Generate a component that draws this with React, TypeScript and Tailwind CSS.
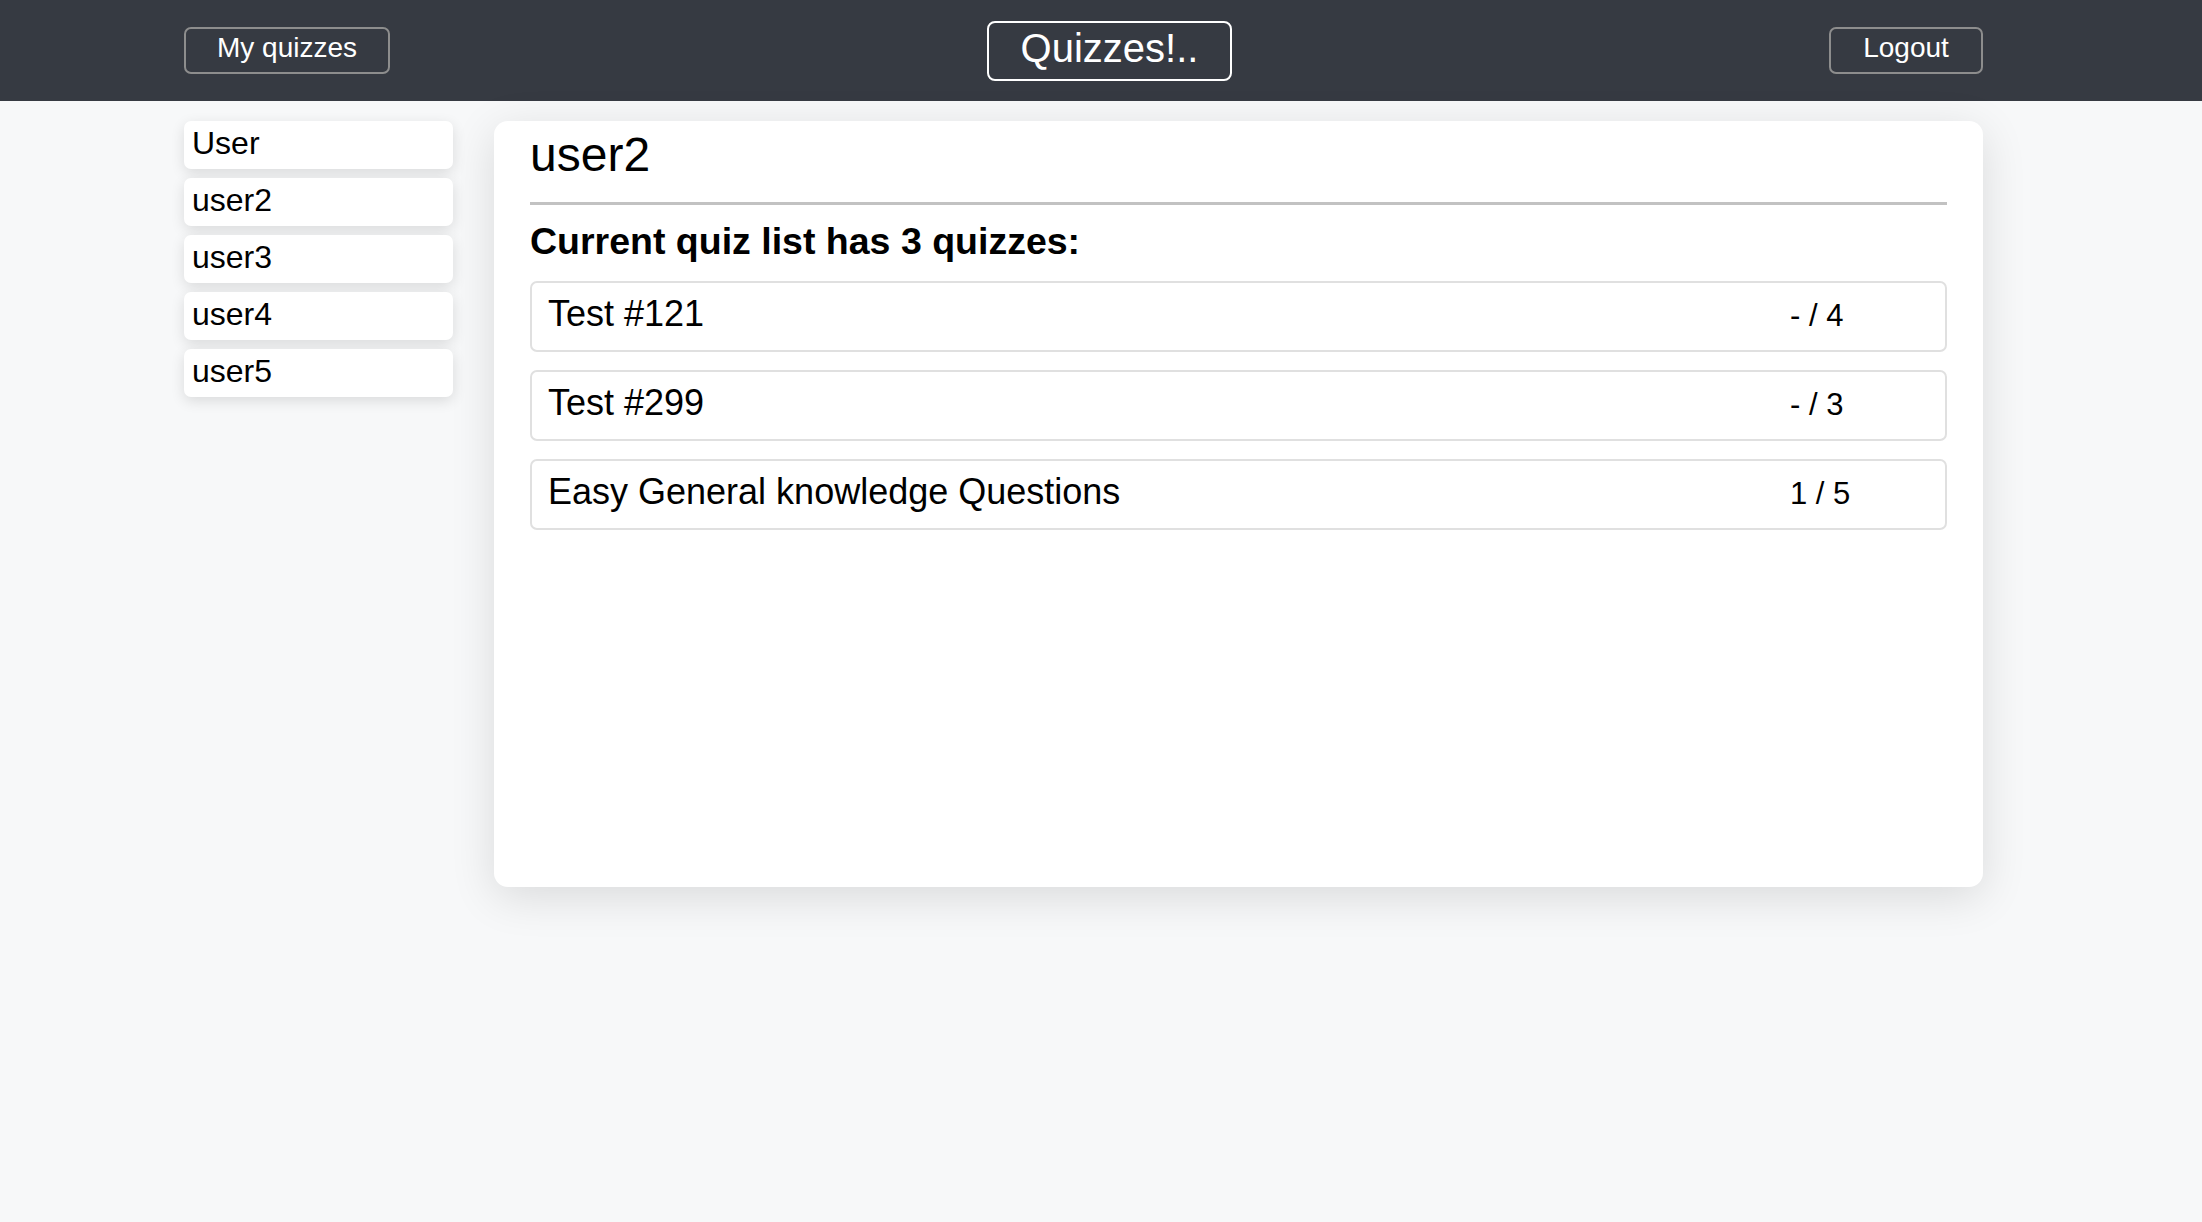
const users = ["User", "user2", "user3", "user4", "user5"];

const quizzes = [
  { title: "Test #121", score: "- / 4" },
  { title: "Test #299", score: "- / 3" },
  { title: "Easy General knowledge Questions", score: "1 / 5" },
];

function Header() {
  return (
    <header className="h-[101px] bg-[#363a42]">
      <div className="ml-[184px] flex h-full w-[1799px] items-center justify-between text-white">
        <button className="flex h-[47px] w-[206px] items-center justify-center rounded-[7px] border-2 border-[#8d8d8d] pb-[5px] text-[28px]">
          My quizzes
        </button>
        <button className="flex h-[60px] w-[245px] items-center justify-center rounded-[8px] border-2 border-white pb-[6px] text-[40px]">
          Quizzes!..
        </button>
        <button className="flex h-[47px] w-[154px] items-center justify-center rounded-[7px] border-2 border-[#8d8d8d] pb-[5px] text-[28px]">
          Logout
        </button>
      </div>
    </header>
  );
}

function Sidebar() {
  return (
    <nav className="flex w-[269px] shrink-0 flex-col gap-[9px]">
      {users.map((u) => (
        <div
          key={u}
          className="h-[48px] rounded-[7px] bg-white px-2 pt-[4px] text-[32px] leading-[37px] shadow-[0_4px_14px_rgba(0,0,0,0.12)]"
        >
          {u}
        </div>
      ))}
    </nav>
  );
}

function QuizRow({ title, score }: { title: string; score: string }) {
  return (
    <div className="flex h-[71px] items-baseline rounded-[7px] border-2 border-[#e0e0e0] pl-4 pr-[17px] pt-[10px]">
      <span className="min-w-0 flex-1 truncate text-[36px] leading-[41px]">{title}</span>
      <span className="w-[138px] text-[31px] leading-[41px]">{score}</span>
    </div>
  );
}

export default function App() {
  return (
    <div className="min-h-[1222px] bg-[#f7f8f9] text-black [font-family:'Liberation_Sans',Arial,sans-serif]">
      <Header />
      <main className="ml-[184px] flex w-[1799px] gap-[41px] pt-[20px]">
        <Sidebar />
        <section className="h-[766px] flex-1 rounded-[14px] bg-white px-[36px] pt-[6px] shadow-[0_10px_45px_rgba(0,0,0,0.12)]">
          <h1 className="text-[48px] leading-[55px]">user2</h1>
          <div className="mt-[20px] h-[3px] bg-[#c2c2c2]" />
          <h2 className="mt-[15px] text-[37.5px] font-bold leading-[43px]">
            Current quiz list has 3 quizzes:
          </h2>
          <div className="mt-[18px] flex flex-col gap-[18px]">
            {quizzes.map((q) => (
              <QuizRow key={q.title} title={q.title} score={q.score} />
            ))}
          </div>
        </section>
      </main>
    </div>
  );
}
